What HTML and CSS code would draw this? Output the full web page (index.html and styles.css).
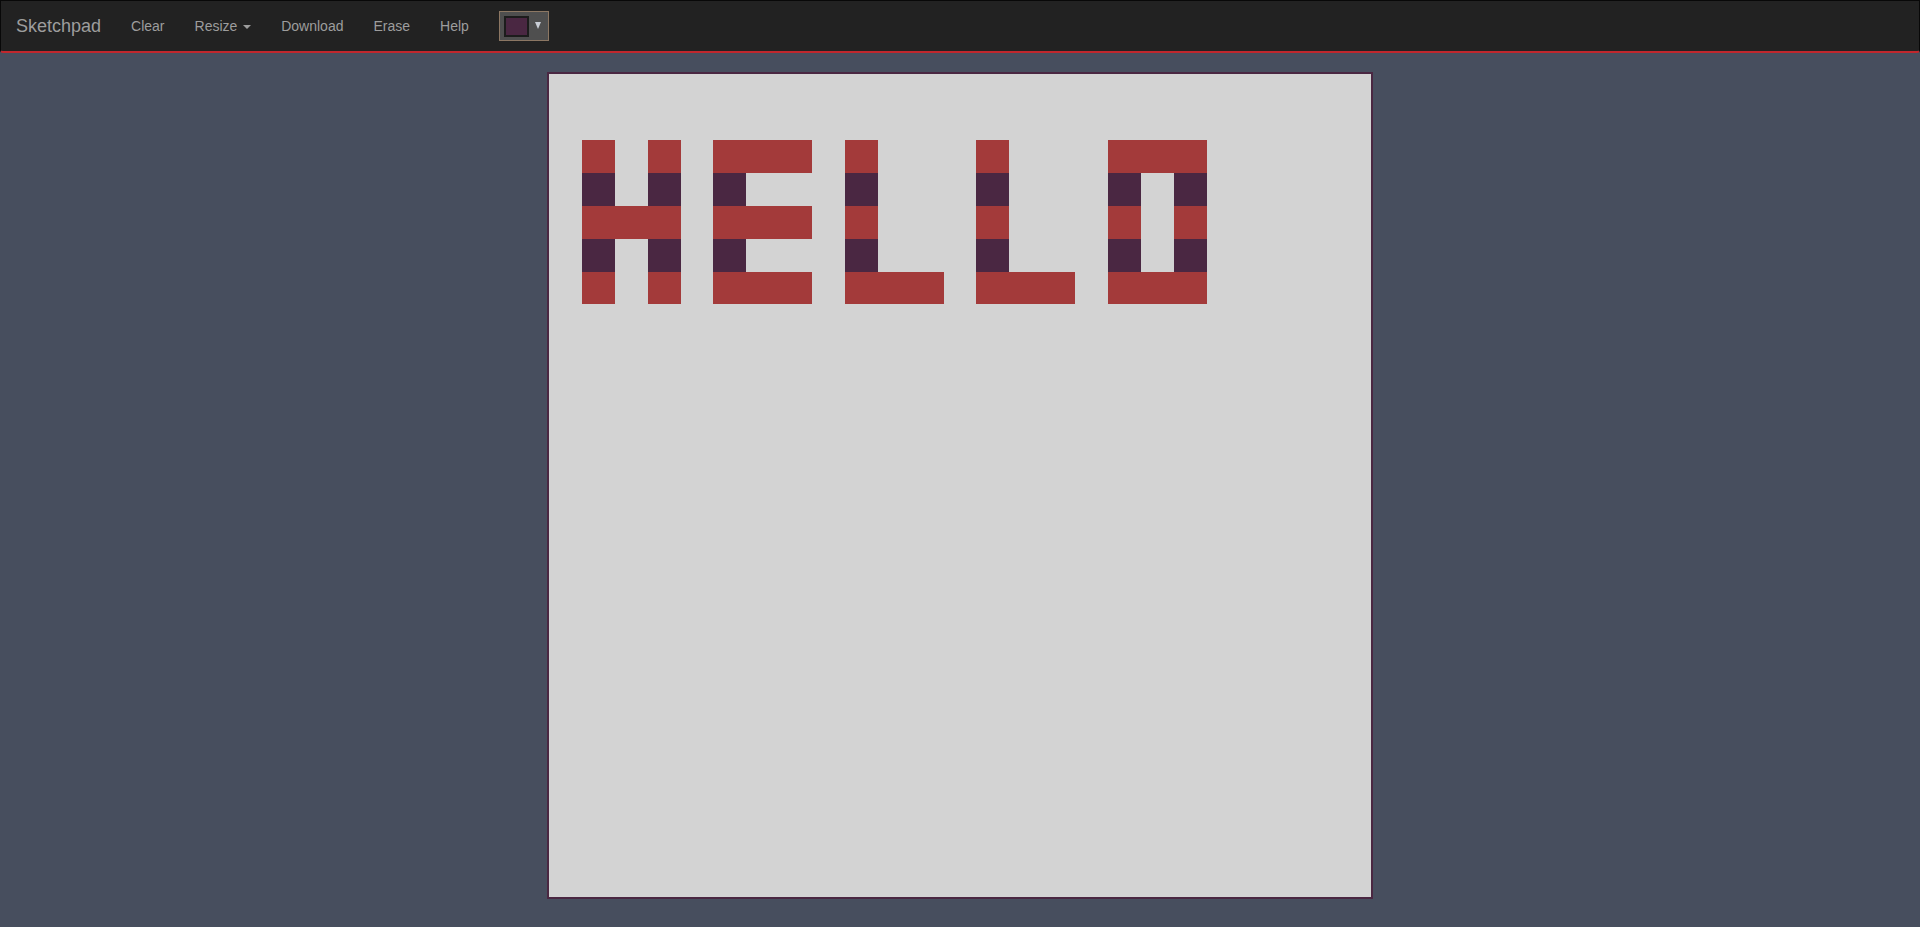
FILE: index.html
```html
<!DOCTYPE html>
<html>
<head>
<meta charset="utf-8">
<title>Sketchpad</title>
<link rel="stylesheet" href="styles.css">
</head>
<body>
<nav class="navbar">
  <a class="brand" href="#">Sketchpad</a>
  <ul class="nav">
    <li><a href="#">Clear</a></li>
    <li><a href="#">Resize <span class="caret"></span></a></li>
    <li><a href="#">Download</a></li>
    <li><a href="#">Erase</a></li>
    <li><a href="#">Help</a></li>
    <li class="picker-item">
      <div class="picker">
        <span class="swatch"></span>
        <span class="arrow"></span>
      </div>
    </li>
  </ul>
</nav>
<main class="stage">
  <div class="pad" id="pad"></div>
</main>
<script src="script.js"></script>
</body>
</html>
```
FILE: styles.css
```css
html, body {
  margin: 0;
  padding: 0;
}
body {
  background: #474e5e;
  font-family: "Liberation Sans", Arial, sans-serif;
  font-size: 14px;
  min-height: 927px;
}
.navbar {
  display: flex;
  align-items: center;
  height: 50px;
  background: #222222;
  border: 1px solid #080808;
  border-bottom: 2px solid #c1272d;
  border-radius: 0 0 3px 3px;
  box-sizing: content-box;
}
.brand {
  padding: 0 15px;
  font-size: 18px;
  line-height: 50px;
  color: #9d9d9d;
  text-decoration: none;
}
.nav {
  display: flex;
  align-items: center;
  list-style: none;
  margin: 0;
  padding: 0;
}
.nav a {
  display: block;
  padding: 0 15px;
  line-height: 50px;
  color: #9d9d9d;
  text-decoration: none;
}
.caret {
  display: inline-block;
  width: 0;
  height: 0;
  margin-left: 2px;
  vertical-align: middle;
  border-top: 4px solid #9d9d9d;
  border-left: 4px solid transparent;
  border-right: 4px solid transparent;
}
.picker-item {
  margin-left: 15px;
}
.picker {
  display: flex;
  align-items: center;
  gap: 6px;
  width: 50px;
  height: 30px;
  box-sizing: border-box;
  padding: 0 4px;
  background: #4f4f4f;
  border: 1px solid #8c7763;
}
.swatch {
  width: 25px;
  height: 21px;
  box-sizing: border-box;
  background: #4a2742;
  border: 2px solid #1c1c1c;
}
.arrow {
  width: 0;
  height: 0;
  border-top: 7px solid #c9ced6;
  border-left: 3.5px solid transparent;
  border-right: 3.5px solid transparent;
  margin-top: -2px;
}
.stage {
  display: flex;
  justify-content: center;
  padding-top: 19px;
}
.pad {
  width: 822px;
  height: 823px;
  background: #d3d3d3;
  border: 2px solid #4a2742;
  display: grid;
  grid-template-columns: repeat(25, 1fr);
  grid-template-rows: repeat(25, 1fr);
}
.cell {
  min-width: 0;
  min-height: 0;
}
.cell.r {
  background: #a33a3a;
}
.cell.p {
  background: #4a2742;
}
```
FILE: script.js
```js
(function () {
  var rows = [
    ".........................",
    ".........................",
    ".r.r.rrr.r...r...rrr.....",
    ".p.p.p...p...p...p.p.....",
    ".rrr.rrr.r...r...r.r.....",
    ".p.p.p...p...p...p.p.....",
    ".r.r.rrr.rrr.rrr.rrr....."
  ];
  var pad = document.getElementById('pad');
  var frag = document.createDocumentFragment();
  for (var y = 0; y < 25; y++) {
    for (var x = 0; x < 25; x++) {
      var d = document.createElement('div');
      d.className = 'cell';
      var ch = rows[y] ? rows[y].charAt(x) : '.';
      if (ch === 'r') d.className += ' r';
      if (ch === 'p') d.className += ' p';
      frag.appendChild(d);
    }
  }
  pad.appendChild(frag);
})();
```
